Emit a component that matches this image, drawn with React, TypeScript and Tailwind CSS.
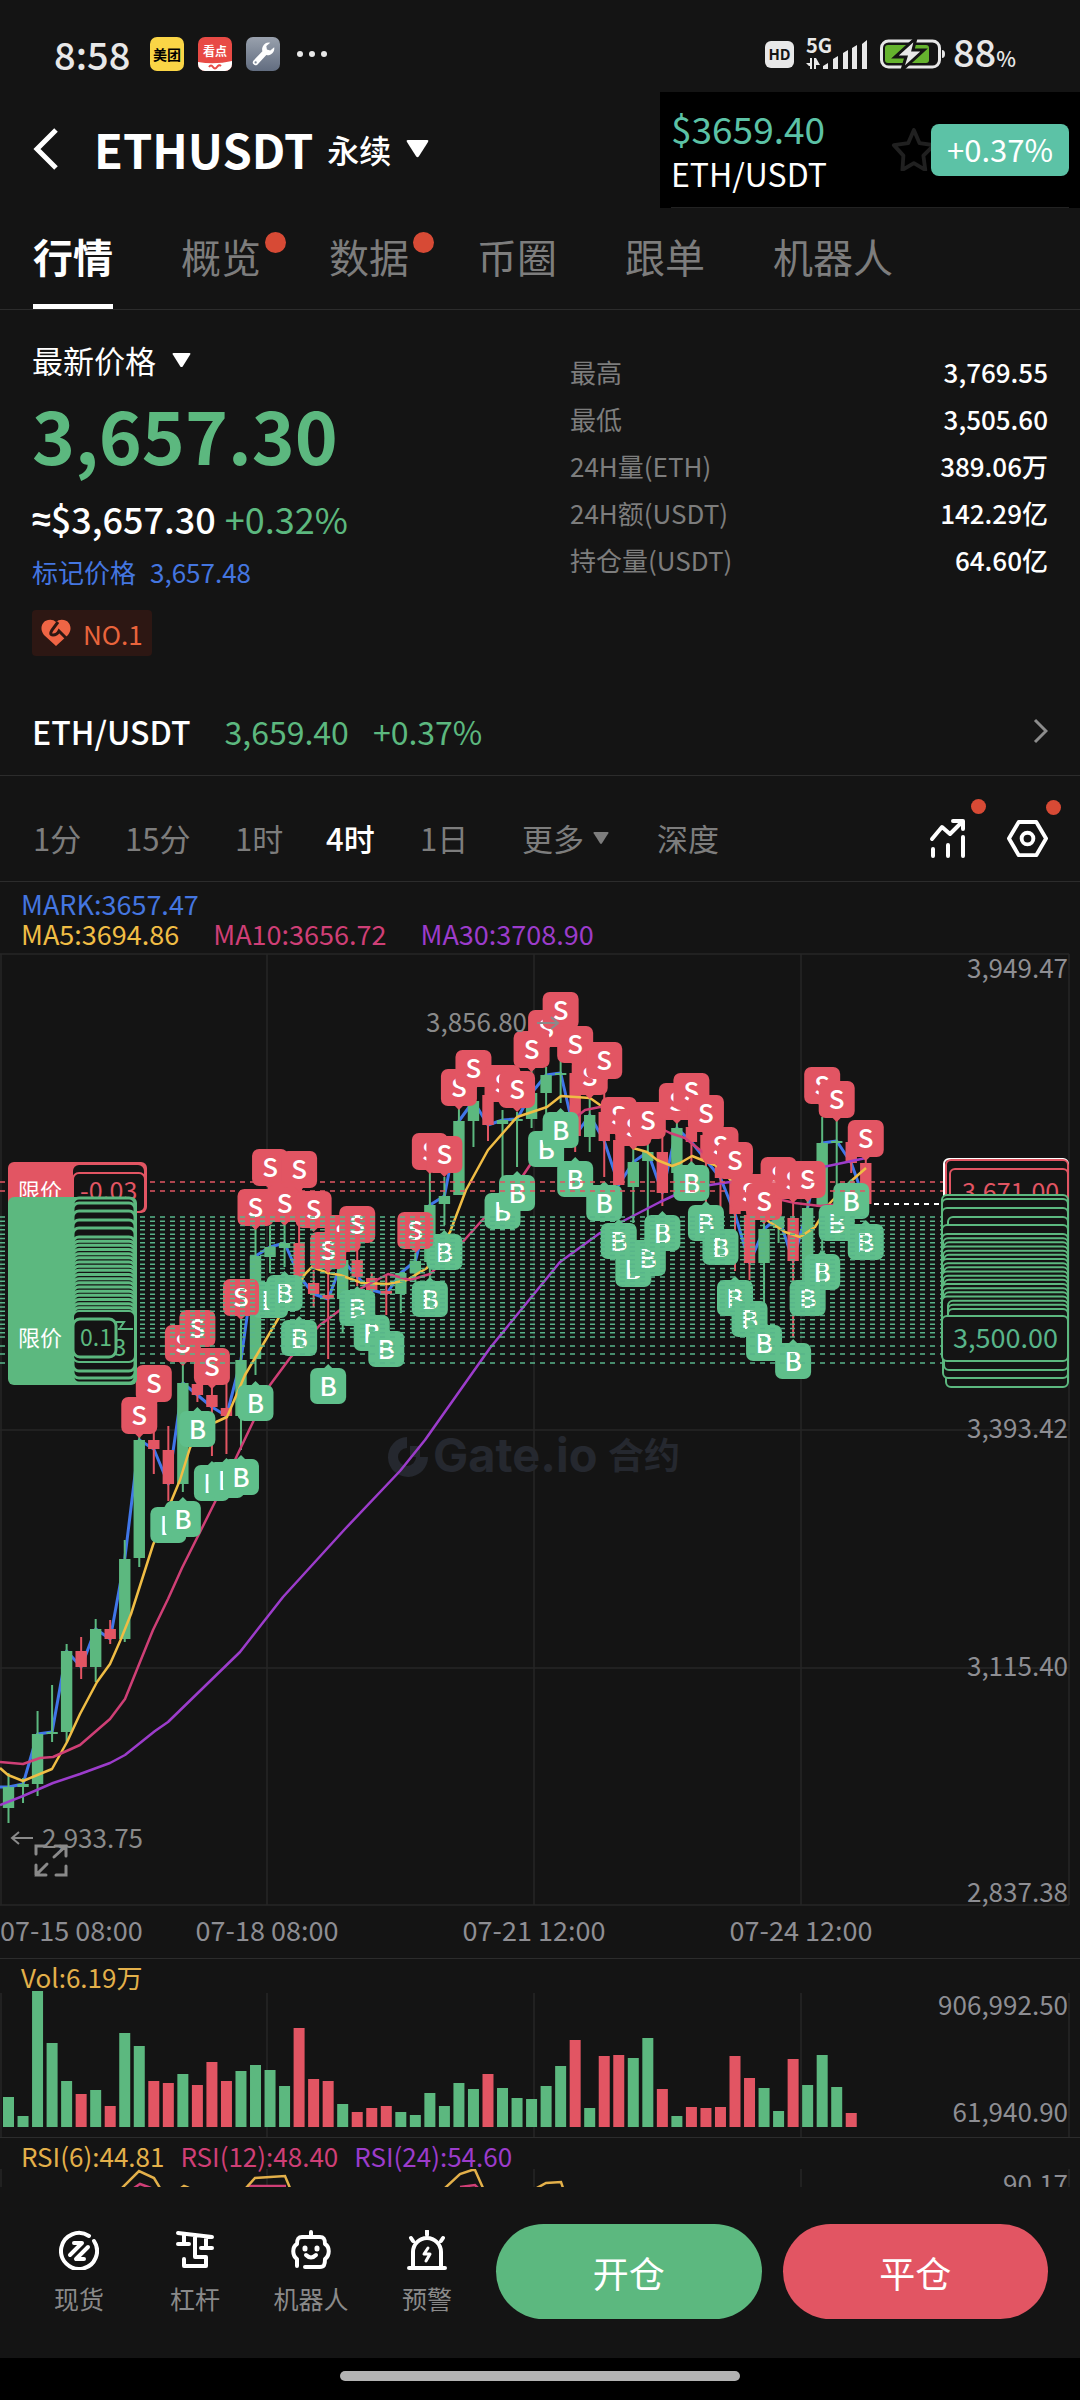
import React from "react";

const GREEN = "#5cb87f";
const RED = "#e25563";
const BG = "#141414";
const STEP = 14.53;

const cx = (i: number) => 8.5 + STEP * i;

// [up, high, body top, body bottom, low]
const candles: [number, number, number, number, number][] = [
  [1, 1773, 1787, 1808, 1823],
  [1, 1778, 1784, 1787, 1803],
  [1, 1711, 1734, 1784, 1796],
  [1, 1685, 1732, 1734, 1742],
  [1, 1644, 1651, 1732, 1742],
  [0, 1637, 1651, 1667, 1679],
  [1, 1619, 1629, 1667, 1682],
  [0, 1620, 1629, 1639, 1644],
  [1, 1540, 1559, 1639, 1642],
  [1, 1436, 1440, 1558, 1567],
  [0, 1430, 1440, 1449, 1474],
  [0, 1426, 1450, 1484, 1501],
  [1, 1365, 1383, 1484, 1492],
  [0, 1383, 1384, 1395, 1402],
  [0, 1387, 1395, 1407, 1456],
  [0, 1383, 1408, 1416, 1454],
  [1, 1320, 1360, 1416, 1450],
  [1, 1228, 1256, 1359, 1375],
  [1, 1226, 1247, 1257, 1273],
  [1, 1225, 1243, 1248, 1267],
  [0, 1224, 1243, 1276, 1282],
  [0, 1270, 1283, 1294, 1307],
  [0, 1268, 1295, 1299, 1359],
  [1, 1250, 1260, 1299, 1333],
  [0, 1249, 1260, 1277, 1286],
  [0, 1273, 1278, 1290, 1313],
  [0, 1275, 1291, 1294, 1315],
  [1, 1272, 1273, 1294, 1313],
  [1, 1253, 1261, 1273, 1282],
  [1, 1173, 1205, 1262, 1278],
  [1, 1177, 1196, 1204, 1225],
  [1, 1107, 1121, 1195, 1195],
  [1, 1097, 1101, 1121, 1147],
  [0, 1080, 1095, 1125, 1141],
  [1, 1110, 1120, 1124, 1177],
  [1, 1112, 1119, 1121, 1167],
  [1, 1070, 1093, 1119, 1128],
  [1, 1067, 1075, 1093, 1130],
  [1, 1060, 1073, 1075, 1103],
  [0, 1063, 1073, 1136, 1152],
  [1, 1095, 1115, 1137, 1152],
  [0, 1092, 1112, 1141, 1177],
  [0, 1137, 1140, 1185, 1185],
  [1, 1148, 1162, 1187, 1223],
  [1, 1143, 1152, 1161, 1227],
  [0, 1137, 1152, 1193, 1206],
  [1, 1123, 1128, 1173, 1180],
  [0, 1125, 1127, 1142, 1162],
  [0, 1133, 1135, 1160, 1207],
  [0, 1150, 1155, 1178, 1207],
  [0, 1170, 1177, 1214, 1271],
  [0, 1213, 1215, 1263, 1280],
  [1, 1218, 1229, 1263, 1303],
  [1, 1215, 1217, 1228, 1243],
  [0, 1202, 1218, 1261, 1337],
  [1, 1198, 1208, 1280, 1285],
  [1, 1117, 1143, 1207, 1250],
  [1, 1120, 1141, 1143, 1208],
  [0, 1140, 1142, 1163, 1173],
  [0, 1160, 1163, 1204, 1204],
];

// [candle index, centre y]
const sells: [number, number][] = [
  [9, 1415], [10, 1383], [12, 1343], [13, 1328], [14, 1366], [16, 1297],
  [17, 1207], [18, 1167], [19, 1203], [20, 1169], [21, 1209], [23, 1233],
  [22, 1250], [24, 1224], [28, 1230], [29, 1151], [30, 1154], [31, 1087],
  [32, 1068], [34, 1083], [35, 1089], [37, 1028], [36, 1049], [38, 1010],
  [40, 1076], [39, 1044], [41, 1060], [42, 1115], [43, 1127], [44, 1120],
  [46, 1101], [47, 1091], [48, 1113], [49, 1145], [50, 1160], [51, 1192],
  [53, 1175], [52, 1201], [54, 1180], [55, 1179], [56, 1085], [57, 1099],
  [59, 1138],
];

const buys: [number, number][] = [
  [11, 1525], [12, 1519], [13, 1429], [14, 1483], [15, 1480], [16, 1477],
  [17, 1403], [18, 1300], [19, 1293], [20, 1338], [22, 1386], [24, 1308],
  [25, 1333], [26, 1349], [29, 1299], [30, 1252], [34, 1211], [35, 1193],
  [37, 1149], [38, 1130], [39, 1179], [41, 1203], [43, 1269], [42, 1241],
  [44, 1258], [45, 1233], [47, 1183], [48, 1223], [49, 1247], [50, 1298],
  [51, 1319], [52, 1343], [54, 1361], [55, 1298], [57, 1223], [56, 1272],
  [58, 1201], [59, 1242],
];

const ma5 =
  "0,1768 8,1775 23,1781 52,1769 67,1742 80,1714 97,1682 110,1664 121,1639 131,1614 153,1545 180,1480 190,1448 200,1428 216,1422 227,1417 245,1375 278,1319 305,1274 312,1267 328,1273 340,1275 362,1283 388,1284 407,1280 427,1268 450,1232 466,1190 488,1150 517,1117 547,1107 561,1096 590,1098 600,1105 633,1148 647,1152 657,1160 672,1166 680,1163 692,1156 717,1166 740,1190 765,1219 785,1232 800,1237 815,1227 830,1203 850,1182 866,1168";
const ma10 =
  "0,1762 23,1764 40,1758 53,1757 80,1745 110,1719 125,1699 140,1662 153,1630 168,1599 182,1568 215,1502 253,1422 270,1385 290,1358 320,1325 340,1310 358,1290 388,1274 410,1280 430,1274 460,1245 485,1217 510,1195 530,1165 560,1130 585,1110 605,1106 640,1118 670,1133 685,1138 700,1150 730,1175 760,1195 795,1203 820,1206 850,1203 866,1205";
const ma30 =
  "0,1805 23,1796 53,1783 80,1774 110,1763 125,1755 155,1731 168,1722 240,1652 283,1597 345,1529 400,1471 425,1440 490,1348 560,1262 600,1233 660,1202 690,1188 730,1182 770,1177 828,1166 866,1158";

// [up, bar height]
const volumes: [number, number][] = [
  [1, 30], [1, 11], [1, 136], [1, 84], [1, 46], [0, 33], [1, 37], [0, 21],
  [1, 94], [1, 81], [0, 46], [0, 44], [1, 53], [0, 42], [0, 65], [0, 46],
  [1, 56], [1, 62], [1, 57], [1, 41], [0, 99], [0, 48], [0, 46], [1, 23],
  [0, 15], [0, 19], [0, 21], [1, 15], [1, 12], [1, 34], [1, 21], [1, 44],
  [1, 38], [0, 53], [1, 39], [1, 29], [1, 28], [1, 41], [1, 61], [0, 87],
  [1, 19], [0, 71], [0, 72], [1, 69], [1, 89], [0, 38], [1, 11], [0, 20],
  [0, 19], [0, 20], [0, 71], [0, 49], [1, 39], [1, 16], [0, 68], [1, 42],
  [1, 72], [1, 40], [0, 14],
];

const buyLines = [
  ...Array.from({ length: 29 }, (_, i) => 1217 + (i * 120) / 28),
  1346, 1354, 1363,
];

const stackTops = [1198, 1203, 1211, 1220, 1228];
const thinTops = Array.from({ length: 19 }, (_, i) => 1237 + (i * 75) / 18);

const tabs = [
  { name: "行情", active: true },
  { name: "概览", dot: true },
  { name: "数据", dot: true },
  { name: "币圈" },
  { name: "跟单" },
  { name: "机器人" },
];

const stats = [
  ["最高", "3,769.55"],
  ["最低", "3,505.60"],
  ["24H量(ETH)", "389.06万"],
  ["24H额(USDT)", "142.29亿"],
  ["持仓量(USDT)", "64.60亿"],
];

const Triangle = ({ className }: { className: string }) => (
  <svg viewBox="0 0 24 18" className={className} fill="currentColor">
    <path d="M2 0h20q2 0 1 2L13.500 17q-1.500 2-3 0L1 2Q0 0 2 0z" />
  </svg>
);

const StatusBar = () => (
  <div className="flex h-[92px] items-center justify-between pt-[16px] pr-[64px] pl-[54px] text-[#e8e8e8]">
    <div className="flex items-center">
      <span className="w-[96px] text-[38px] leading-[40px] font-medium">8:58</span>
      <span className="flex h-[34px] w-[34px] items-center justify-center rounded-[7px] bg-[#fad546] text-[14px] font-bold text-black">
        美团
      </span>
      <span className="ml-[14px] flex h-[34px] w-[34px] flex-col overflow-hidden rounded-[7px] bg-[#e84a45] text-center text-[12px] leading-[14px] font-bold text-white">
        <span className="pt-[7px]">看点</span>
        <svg viewBox="0 0 34 13" className="w-full">
          <path d="M0 4q17 3 34-1v10H0z" fill="#fff" />
          <path d="M11 9q2-3 4 0t4 0 4-1" fill="none" stroke="#e84a45" strokeWidth="2" />
        </svg>
      </span>
      <span className="ml-[14px] flex h-[34px] w-[34px] items-center justify-center rounded-[7px] bg-linear-to-b from-[#99a1ad] to-[#626d80]">
        <svg viewBox="0 0 24 24" className="w-[27px]" fill="#fff">
          <path d="M21.500 5.500l-3.500 3-3-1-.500-3 3.500-3a6 6 0 0 0-7 7.500L3 17.500a2.500 2.500 0 0 0 3.500 3.500l8-8.500a6 6 0 0 0 7-7z" />
          <circle cx="5" cy="19" r="1" fill="#7c8796" />
        </svg>
      </span>
      <svg viewBox="0 0 32 8" className="ml-[16px] w-[32px]" fill="currentColor">
        <circle cx="4" cy="4" r="3" />
        <circle cx="16" cy="4" r="3" />
        <circle cx="28" cy="4" r="3" />
      </svg>
    </div>
    <div className="flex items-center">
      <span className="flex h-[27px] w-[29px] items-center justify-center rounded-[6px] bg-[#e8e8e8] text-[15px] font-bold text-[#141414]">
        HD
      </span>
      <svg viewBox="0 -6 62 46" className="ml-[12px] w-[62px]" fill="currentColor">
        <text x="0" y="16" fontSize="20" fontWeight="700">
          5G
        </text>
        <path d="M0 26h4v-5h2v11H4v-3H3zM8 21h2l4 7h-4v4H8zM17 29l5-3v6h-5zM27 22l5-3v13h-5zM37 16l5-3v19h-5zM46 11l5-3v24h-5zM56 7l5-4v29h-5z" />
      </svg>
      <svg viewBox="0 0 66 32" className="ml-[12px] w-[66px]">
        <rect x="1.500" y="3" width="58" height="26" rx="7" fill="none" stroke="#e8e8e8" strokeWidth="3" />
        <rect x="5" y="7" width="44" height="18" rx="3" fill="#65b32e" />
        <path d="M62 12q3 0 3 4t-3 4z" fill="#e8e8e8" />
        <path d="M36 0L15 19h11l-4 13 22-20H33z" fill="#e8e8e8" stroke="#141414" strokeWidth="3" />
      </svg>
      <span className="ml-[7px] text-[38px] leading-[40px] font-medium">
        88<span className="text-[21px]">%</span>
      </span>
    </div>
  </div>
);

const Header = () => (
  <header className="flex h-[116px] items-center justify-between pl-[33px]">
    <div className="flex items-center pb-[2px] text-white">
      <button aria-label="返回">
        <svg viewBox="0 0 26 42" className="w-[26px]" fill="none" stroke="currentColor" strokeWidth="5">
          <path d="M23 2L4 21l19 19" />
        </svg>
      </button>
      <button className="flex items-center">
        <span className="ml-[35px] text-[47px] leading-[60px] font-bold">ETHUSDT</span>
        <span className="ml-[14px] text-[32px] leading-[40px] font-medium">永续</span>
        <Triangle className="ml-[15px] w-[23px]" />
      </button>
    </div>
    <div className="flex h-full w-[420px] items-center justify-between bg-black pr-[11px] pl-[11px]">
      <div className="flex h-full w-full items-center justify-between border-b border-[#222]">
        <div>
          <p className="text-[37px] leading-[46px] text-[#5cc2a6]">$3659.40</p>
          <p className="text-[32px] leading-[44px] text-white">ETH/USDT</p>
        </div>
        <div className="flex items-center">
          <svg viewBox="0 0 42 46" className="w-[40px]" fill="none" stroke="#202020" strokeWidth="4" strokeLinejoin="round">
            <path d="M24 2l6 14 15 2-11 11 2 15-12-7-12 7 1-15L3 18l15-2z" />
          </svg>
          <span className="flex h-[52px] items-center rounded-[8px] bg-[#5cc2a6] px-[16px] text-[31px] text-white">
            +0.37%
          </span>
        </div>
      </div>
    </div>
  </header>
);

const Info = () => (
  <section className="border-b border-[#2c2c2c] px-[32px] pb-[24px]">
    <div className="flex justify-between">
      <div className="flex flex-col items-start pt-[30px]">
        <button className="flex items-center text-[31px] leading-[40px] text-white">
          最新价格 <Triangle className="ml-[16px] w-[19px]" />
        </button>
        <p className="mt-[13px] text-[73px] leading-[80px] font-bold text-[#5cb87f]">3,657.30</p>
        <p className="mt-[25px] flex items-center text-[36px] leading-[40px] font-medium text-white">
          <span className="font-['Noto_Sans',sans-serif] text-[34px] font-bold">≈</span>
          <span>$3,657.30</span>
          <span className="ml-[9px] font-normal text-[#5cb87f]">+0.32%</span>
        </p>
        <p className="mt-[14px] flex gap-[14px] text-[26px] leading-[40px] text-[#4476e0]">
          <span>标记价格</span>
          <span>3,657.48</span>
        </p>
        <p className="mt-[18px] flex h-[46px] items-center gap-[12px] rounded-[4px] bg-[#2d1713] px-[9px] text-[26px] text-[#e9643c]">
          <svg viewBox="0 0 30 28" className="w-[30px]">
            <path d="M15 27L3 16C-2 10 1 2 7 1q5-1 8 2 3-3 8-2c6 1 9 9 4 15z" fill="#ef6545" />
            <path d="M17 3l-6 8q-3 5 1 5t6-4l3 3 6 6" fill="none" stroke="#2d1713" strokeWidth="3" />
          </svg>
          NO.1
        </p>
      </div>
      <dl className="w-[478px] pt-[38px]">
        {stats.map(([label, value]) => (
          <div key={label} className="flex h-[47px] items-center justify-between text-[26px]">
            <dt className="text-[#7d7d7d]">{label}</dt>
            <dd className="font-medium text-white">{value}</dd>
          </div>
        ))}
      </dl>
    </div>
    <a href="#spot" className="mt-[55px] flex items-center text-[32px] leading-[40px]">
      <span className="font-medium text-white">ETH/USDT</span>
      <span className="ml-[34px] text-[#5cb87f]">3,659.40</span>
      <span className="ml-[24px] text-[#5cb87f]">+0.37%</span>
      <svg viewBox="0 0 15 26" className="ml-auto w-[15px]" fill="none" stroke="#8c8c8c" strokeWidth="3">
        <path d="M2 2l11 11L2 24" />
      </svg>
    </a>
  </section>
);

const Timeframes = () => (
  <div className="flex h-[106px] items-center border-b border-[#2c2c2c] pt-[18px] pr-[32px] pl-[33px] text-[31px] leading-[40px] text-[#7d7d7d]">
    <button className="w-[92px] text-left">1分</button>
    <button className="w-[110px] text-left">15分</button>
    <button className="w-[91px] text-left">1时</button>
    <button className="w-[94px] text-left font-medium text-white">4时</button>
    <button className="w-[102px] text-left">1日</button>
    <button className="flex w-[135px] items-center">
      更多
      <Triangle className="ml-[9px] w-[16px]" />
    </button>
    <button>深度</button>
    <div className="ml-auto flex items-center gap-[40px] pt-[2px] text-white">
      <button aria-label="指标" className="relative">
        <svg viewBox="0 0 38 40" className="w-[38px]" fill="none" stroke="currentColor" strokeWidth="4" strokeLinecap="round" strokeLinejoin="round">
          <path d="M3 20l10-12 8 7L33 3M24 2h10v8M4 30v7M19 26v11M34 18v19" />
        </svg>
        <span className="absolute -top-[20px] left-[42px] h-[15px] w-[15px] rounded-full bg-[#d74a35]" />
      </button>
      <button aria-label="设置" className="relative">
        <svg viewBox="0 0 42 38" className="w-[41px]" fill="none" stroke="currentColor" strokeWidth="4" strokeLinejoin="round">
          <path d="M12 2h18l10 17-10 17H12L2 19z" />
          <circle cx="21" cy="19" r="6" />
        </svg>
        <span className="absolute -top-[20px] left-[39px] h-[15px] w-[15px] rounded-full bg-[#d74a35]" />
      </button>
    </div>
  </div>
);

const Tag = ({ i, y, side }: { i: number; y: number; side: "S" | "B" }) => {
  const x = cx(i);
  const h = side === "S" ? 37 : 36;
  return (
    <g fill={side === "S" ? RED : "#5fbf8b"}>
      <rect x={x - 18} y={y - 18} width="36" height={h} rx="7" />
      <path
        d={
          side === "S"
            ? `M${x - 5} ${y + 18}h10l-5 5z`
            : `M${x - 5} ${y - 17}h10l-5-5z`
        }
      />
      <text x={x} y={y + 10} fontSize="26" fontWeight="500" fill="#fff" textAnchor="middle">
        {side}
      </text>
    </g>
  );
};

const MainChart = () => (
  <svg viewBox="0 949 1080 1009" className="block w-full">
    <g stroke="#262626" strokeWidth="1.500">
      <path d="M0 954H1069M0 1430H1069M0 1668H1069M0 1905H1069" />
      <path d="M1 954V1905M267 954V1905M534 954V1905M801 954V1905M1069 954V1905" />
    </g>

    {/* watermark */}
    <g fill="#25282f">
      <path d="M407 1437a20 20 0 1 0 21 20h-12a9 9 0 1 1-9-9z" />
      <path d="M410 1446h10v11h-10z" />
      <text x="433" y="1472" fontSize="47" fontWeight="700" fontFamily="Inter, 'Noto Sans CJK SC', sans-serif">
        Gate.io
      </text>
      <text x="608" y="1469" fontSize="36" fontWeight="700">
        合约
      </text>
    </g>

    <g fill="none" strokeWidth="3" strokeLinejoin="round">
      <polyline
        points={"0,1787 " + candles.map((c, i) => `${cx(i)},${c[0] ? c[2] : c[3]}`).join(" ")}
        stroke="#4076e8"
      />
    </g>
    {candles.map(([up, high, top, bottom, low], i) => (
      <g key={i} fill={up ? GREEN : RED}>
        <rect x={cx(i) - 1} y={high} width="2" height={low - high} />
        <rect x={cx(i) - 5.7} y={top} width="11.4" height={Math.max(bottom - top, 2)} />
      </g>
    ))}
    <g fill="none" strokeWidth="2.500" strokeLinejoin="round">
      <polyline points={ma5} stroke="#f0bd45" />
      <polyline points={ma10} stroke="#cf3f76" />
      <polyline points={ma30} stroke="#9c3ccb" />
    </g>

    {buys.map(([i, y]) => (
      <Tag key={`b${i}`} i={i} y={y} side="B" />
    ))}
    {sells.map(([i, y]) => (
      <Tag key={`s${i}`} i={i} y={y} side="S" />
    ))}

    {/* open order levels */}
    <g strokeDasharray="5 5" strokeWidth="1.500">
      <path d="M0 1182H948M0 1191H948" stroke={RED} />
      {buyLines.map((y) => (
        <path key={y} d={`M0 ${y}H942`} stroke="#58b58a" />
      ))}
      <path d="M874 1204H942" stroke="#fff" strokeWidth="2" />
    </g>

    {/* left labels */}
    <rect x="8" y="1162" width="139" height="51" rx="6" fill={RED} />
    <rect x="73" y="1165" width="71" height="45" rx="6" fill={BG} />
    <rect x="73" y="1173" width="72" height="39" rx="6" fill={BG} stroke={RED} strokeWidth="2" />
    <g fontSize="22">
      <text x="18" y="1199" fill="#fff">
        限价
      </text>
      <text x="80" y="1200" fill={RED} fontSize="25">
        -0.03
      </text>
    </g>
    <rect x="8" y="1197" width="129" height="188" rx="6" fill={GREEN} />
    {[1342, 1337, 1330].map((y) => (
      <rect key={y} x="73" y={y} width="62" height="41" rx="6" fill={BG} stroke={GREEN} strokeWidth="3" />
    ))}
    {stackTops.map((y) => (
      <rect key={y} x="73" y={y} width="62" height="41" rx="6" fill={BG} stroke={GREEN} strokeWidth="3" />
    ))}
    {thinTops.map((y) => (
      <rect key={y} x="73" y={y} width="62" height="41" rx="6" fill={BG} stroke={GREEN} strokeWidth="3" />
    ))}
    <rect x="73" y="1311" width="62" height="51" rx="6" fill={BG} stroke={GREEN} strokeWidth="2" />
    <path d="M116 1322h8l-4 6M118 1329h15" stroke={GREEN} strokeWidth="2" fill="none" />
    <text x="113" y="1356" fontSize="24" fill={GREEN}>
      3
    </text>
    <rect x="73" y="1319" width="43" height="38" rx="7" fill={BG} stroke={GREEN} strokeWidth="3" />
    <text x="80" y="1346" fontSize="23" fill={GREEN}>
      0.1
    </text>
    <text x="18" y="1346" fontSize="22" fill="#fff">
      限价
    </text>

    {/* right labels */}
    <g fill={BG} strokeWidth="2">
      <rect x="944" y="1159" width="124" height="46" rx="5" stroke="#fff" />
      <rect x="946" y="1160" width="122" height="46" rx="5" stroke={RED} />
      <rect x="950" y="1169" width="118" height="46" rx="5" stroke={RED} />
      <text x="962" y="1201" fontSize="25" fill={RED}>
        3,671.00
      </text>
      <rect x="946" y="1341" width="122" height="46" rx="5" stroke={GREEN} />
      <rect x="943" y="1333" width="125" height="45" rx="5" stroke={GREEN} />
      <rect x="944" y="1325" width="124" height="45" rx="5" stroke={GREEN} />
      {[1195, 1199, 1208, 1217, 1225].map((y, i) => (
        <rect key={y} x={i === 3 ? 948 : 942} y={y} width={i === 3 ? 120 : 126} height="46" rx="5" stroke={GREEN} />
      ))}
      {thinTops.map((y, i) => (
        <rect key={y} x={i > 15 ? 948 : 942 + (i % 3)} y={y - 3} width={i > 15 ? 120 : 126 - (i % 3)} height="44" rx="5" stroke={GREEN} />
      ))}
      <rect x="942" y="1316" width="126" height="45" rx="5" stroke={GREEN} />
      <text x="953" y="1348" fontSize="27" fill="#58b58a">
        3,500.00
      </text>
    </g>

    <g fill="#8e8e93" fontSize="26" textAnchor="end">
      <text x="1068" y="978">3,949.47</text>
      <text x="1068" y="1438">3,393.42</text>
      <text x="1068" y="1676">3,115.40</text>
      <text x="1068" y="1902">2,837.38</text>
    </g>
    <g fill="#8a8a8a" fontSize="26">
      <text x="426" y="1032">3,856.80</text>
      <text x="42" y="1848">2,933.75</text>
      <g fill="none" stroke="#8a8a8a" strokeWidth="2">
        <path d="M12 1838h21M19 1832l-7 6 7 6M537 1023h21M551 1017l7 6-7 6" />
        <path
          d="M36 1854v-8h10M55 1846h11v10M66 1846l-12 11M66 1866v9h-10M46 1875H36v-10M36 1875l11-11"
          strokeWidth="3"
          strokeLinecap="round"
        />
      </g>
    </g>
    <g fill="#8e8e93" fontSize="27">
      <text x="0" y="1941">07-15 08:00</text>
      <text x="267" y="1941" textAnchor="middle">07-18 08:00</text>
      <text x="534" y="1941" textAnchor="middle">07-21 12:00</text>
      <text x="801" y="1941" textAnchor="middle">07-24 12:00</text>
    </g>
  </svg>
);

const Indicators = () => (
  <>
    <div className="border-t border-[#2c2c2c] pt-[3px]">
      <p className="px-[21px] text-[26px] leading-[29px] text-[#e3b04a]">Vol:6.19万</p>
      <svg viewBox="0 1991 1080 146" className="block w-full">
        <path d="M1 1993V2137M267 1993V2137M534 1993V2137M801 1993V2137M1069 1993V2137" stroke="#262626" strokeWidth="1.500" />
        {volumes.map(([up, h], i) => (
          <rect key={i} x={cx(i) - 5.5} y={2127 - h} width="11" height={h} fill={up ? GREEN : RED} />
        ))}
        <g fill="#8e8e93" fontSize="26" textAnchor="end">
          <text x="1068" y="2015">906,992.50</text>
          <text x="1068" y="2122">61,940.90</text>
        </g>
      </svg>
    </div>
    <div className="border-t border-[#2c2c2c] pt-[4px]">
      <p className="flex gap-[16px] px-[21px] text-[26px] leading-[27px]">
        <span className="text-[#e3b04a]">RSI(6):44.81</span>
        <span className="text-[#cf3f76]">RSI(12):48.40</span>
        <span className="text-[#9c3ccb]">RSI(24):54.60</span>
      </p>
      <svg viewBox="0 2169 1080 18" className="block w-full">
        <path d="M1 2169V2187M267 2169V2187M534 2169V2187M801 2169V2187M1069 2169V2187" stroke="#262626" strokeWidth="1.500" />
        <g fill="none" strokeWidth="2.500">
          <path d="M134 2188l6-4 11 4M247 2186h39M460 2187l15-2 3 3" stroke="#cf3f76" />
          <path
            d="M122 2188l17-17 15 7 6 10M181 2188l3-2 5 2M246 2188l9-10 30-2 5 12M445 2188l15-14 12-4h3l8 18M535 2189l11-6 15-1 2 6"
            stroke="#e3b04a"
          />
        </g>
        <text x="1068" y="2194" fontSize="26" fill="#8e8e93" textAnchor="end">
          90.17
        </text>
      </svg>
    </div>
  </>
);

const navItems = [
  {
    label: "现货",
    icon: (
      <>
        <path d="M30 6A18 18 0 1 0 35 11" />
        <path d="M11 25L23 13h-8M29 17L17 29h8" />
      </>
    ),
  },
  {
    label: "杠杆",
    icon: (
      <>
        <path d="M3 3l34 4M9 4v10M3 14h11M31 7v11M26 18h11M20 5v22h11v9H9v-7" />
      </>
    ),
  },
  {
    label: "机器人",
    icon: (
      <>
        <path d="M20 2v5M6 36v-7c-5-4-5-12 0-15 0-5 1-7 5-7h18c4 0 5 2 5 7 5 3 5 11 0 15 0 6-1 8-5 8H14" />
        <path d="M15 25q5 5 10 0" />
        <path d="M14 18v1M26 18v1" strokeWidth="5" />
      </>
    ),
  },
  {
    label: "预警",
    icon: (
      <>
        <path d="M2 38h36M6 38V22a14 14 0 0 1 28 0v16M20 1v4M4 8l2 3M36 8l-2 3" />
        <path d="M21 18l-4 6h6l-4 7" strokeWidth="3" />
      </>
    ),
  },
];

const BottomBar = () => (
  <nav className="flex h-[171px] items-center pr-[32px] pb-[2px] pl-[21px]">
    <div className="flex shrink-0">
      {navItems.map((item) => (
        <button key={item.label} className="flex w-[116px] flex-col items-center gap-[12px]">
          <svg
            viewBox="0 0 40 40"
            className="w-[40px] text-white"
            fill="none"
            stroke="currentColor"
            strokeWidth="4"
            strokeLinecap="round"
            strokeLinejoin="round"
          >
            {item.icon}
          </svg>
          <span className="text-[25px] leading-[32px] text-[#8a8a8a]">{item.label}</span>
        </button>
      ))}
    </div>
    <div className="ml-[11px] flex flex-1 gap-[21px]">
      <button className="h-[95px] flex-1 rounded-full bg-[#5cb87f] text-[36px] text-white">开仓</button>
      <button className="h-[95px] flex-1 rounded-full bg-[#e25563] text-[36px] text-white">平仓</button>
    </div>
  </nav>
);

export default function App() {
  return (
    <div className="w-full bg-[#141414] font-['Noto_Sans_CJK_SC',sans-serif]">
      <StatusBar />
      <Header />
      <nav className="flex h-[102px] gap-[68px] border-b border-[#2c2c2c] px-[33px] text-[40px]">
        {tabs.map((tab) => (
          <button
            key={tab.name}
            className={
              tab.active
                ? "relative border-b-[5px] border-white font-bold text-white"
                : "relative border-b-[5px] border-transparent text-[#7d7d7d]"
            }
          >
            {tab.name}
            {tab.dot && (
              <span className="absolute top-[24px] -right-[25px] h-[21px] w-[21px] rounded-full bg-[#d74a35]" />
            )}
          </button>
        ))}
      </nav>
      <Info />
      <Timeframes />
      <div className="pt-[7px] text-[27px] leading-[30px]">
        <p className="px-[21px] text-[#4476e0]">MARK:3657.47</p>
        <p className="flex gap-[34px] px-[21px]">
          <span className="text-[#f0bd45]">MA5:3694.86</span>
          <span className="text-[#cf3f76]">MA10:3656.72</span>
          <span className="text-[#9c3ccb]">MA30:3708.90</span>
        </p>
      </div>
      <MainChart />
      <Indicators />
      <BottomBar />
      <div className="flex h-[42px] justify-center bg-black pt-[13px]">
        <div className="h-[10px] w-[37%] rounded-full bg-[#b3b3b3]" />
      </div>
    </div>
  );
}
